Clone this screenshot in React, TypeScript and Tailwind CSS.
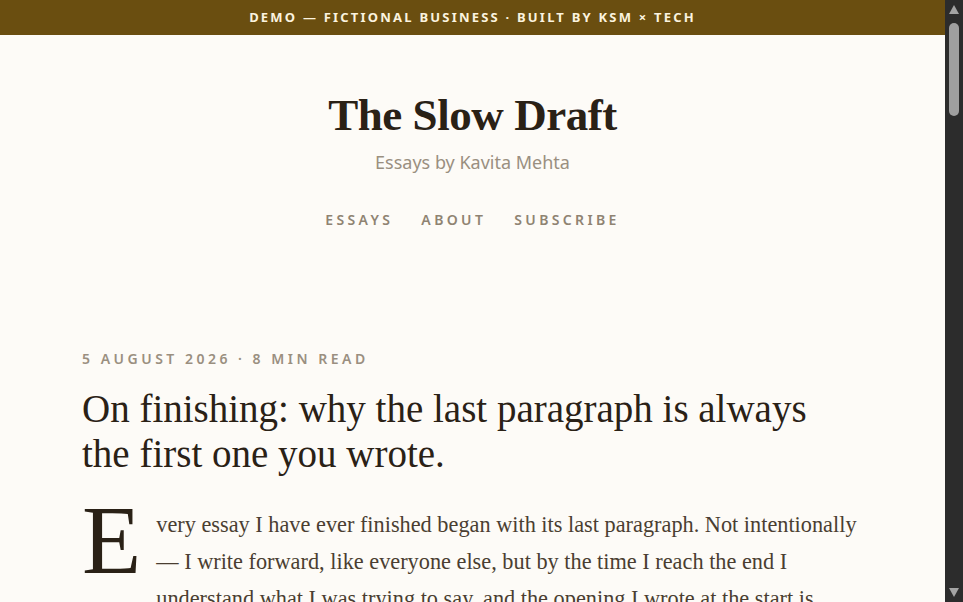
import React from "react";

const paragraphs = [
  "Then I go back, cut the first page, and move the last paragraph to the top. It is the oldest trick I know, and I did not learn it from anyone; I learned it by noticing, over and over, that the thing I was circling was sitting at the bottom of the draft, waiting.",
  "The opening I write on the first morning is almost always a throat-clearing. It announces the subject, it apologises for the subject, it promises that the subject will be worth it. None of that survives. What survives is the sentence I wrote at eleven at night, three weeks later, when I finally understood what the essay was for.",
  "So finishing, for me, is less a matter of reaching the end than of recognising it. The end is the moment the draft tells me what it has been about. Everything before that is scaffolding, and scaffolding comes down.",
  "This is why I no longer worry about beginnings. I write them badly and quickly, knowing they are temporary. I let them be wrong. A wrong beginning is still a way in, and the only way to find the right one is to walk all the way through and look back from the other side.",
  "People sometimes ask how long an essay takes. The honest answer is that it takes as long as it takes to reach the last paragraph, and then one more afternoon to admit that the last paragraph was the first one all along.",
  "I keep a file of these discarded openings. It is long now, longer than most of the essays themselves. Reading it is a strange pleasure: a record of every time I thought I knew what I meant, and every time I was early.",
  "If there is a lesson in it, it is patience. Not the patience of waiting for inspiration, but the patience of writing through the part where you do not yet know, trusting that knowing is on the far side of the draft, not the near one.",
  "And so I finish the way I always do. I read the ending aloud, I hear that it is a beginning, and I move it to the top of the page.",
];

function Scrollbar() {
  return (
    <div className="w-[18px] shrink-0 h-full bg-[#2c2c2c] flex flex-col items-center">
      <svg width="18" height="19" viewBox="0 0 18 19" className="shrink-0">
        <polygon points="4,14 14,14 9,5" fill="#a3a3a3" />
      </svg>
      <div className="mt-[4px] w-[10px] h-[93px] rounded-full bg-[#9f9f9f] shrink-0" />
      <div className="flex-1" />
      <svg width="18" height="19" viewBox="0 0 18 19" className="shrink-0">
        <polygon points="4,5 14,5 9,14" fill="#a3a3a3" />
      </svg>
    </div>
  );
}

export default function App() {
  return (
    <div className="h-screen flex bg-[#fdfbf7]">
      <div className="flex-1 h-full overflow-hidden bg-[#fdfbf7] text-[#2a2116]">
        <div className="h-[35px] bg-[#6a4e10] flex items-center justify-center">
          <span className="font-['Noto_Sans',sans-serif] font-bold text-[13px] tracking-[0.17em] text-[#fbf3df]">
            DEMO — FICTIONAL BUSINESS · BUILT BY KSM × TECH
          </span>
        </div>

        <header className="flex flex-col items-center pt-[54px]">
          <h1 className="font-['Liberation_Serif',serif] font-bold text-[45px] leading-[52px] tracking-[-0.01em] text-[#2a2116]">
            The Slow Draft
          </h1>
          <p className="mt-[9px] font-['Noto_Sans',sans-serif] text-[18px] leading-[24px] text-[#9a8f80]">
            Essays by Kavita Mehta
          </p>
          <nav className="mt-[36px] flex gap-[28px] font-['Noto_Sans',sans-serif] font-semibold text-[14px] leading-[20px] tracking-[0.24em] text-[#8f8372]">
            <a>ESSAYS</a>
            <a>ABOUT</a>
            <a>SUBSCRIBE</a>
          </nav>
        </header>

        <article className="mx-auto max-w-[781px] pt-[119px] pb-[120px]">
          <div className="font-['Noto_Sans',sans-serif] font-semibold text-[14px] tracking-[0.25em] text-[#9a8f80] leading-[20px]">
            5 AUGUST 2026 · 8 MIN READ
          </div>
          <h2 className="mt-[17px] font-['Liberation_Serif',serif] text-[39px] leading-[45px] text-[#2a2116]">
            On finishing: why the last paragraph is always the first one you wrote.
          </h2>
          <div className="mt-[30px] font-['Liberation_Serif',serif] text-[22.3px] leading-[37px] text-[#4a3e31]">
            <p>
              <span className="float-left mr-[15px] mt-[-2px] pb-[10px] font-['Liberation_Serif',serif] text-[97px] leading-[74px] text-[#2a2116]">
                E
              </span>
              very essay I have ever finished began with its last paragraph. Not intentionally — I write forward, like everyone else, but by the time I reach the end I understand what I was trying to say, and the opening I wrote at the start is suddenly false. It was a guess. A useful guess, a necessary one, but a guess.
            </p>
            {paragraphs.map((p, i) => (
              <p key={i} className="mt-[28px]">
                {p}
              </p>
            ))}
          </div>
        </article>
      </div>
      <Scrollbar />
    </div>
  );
}
